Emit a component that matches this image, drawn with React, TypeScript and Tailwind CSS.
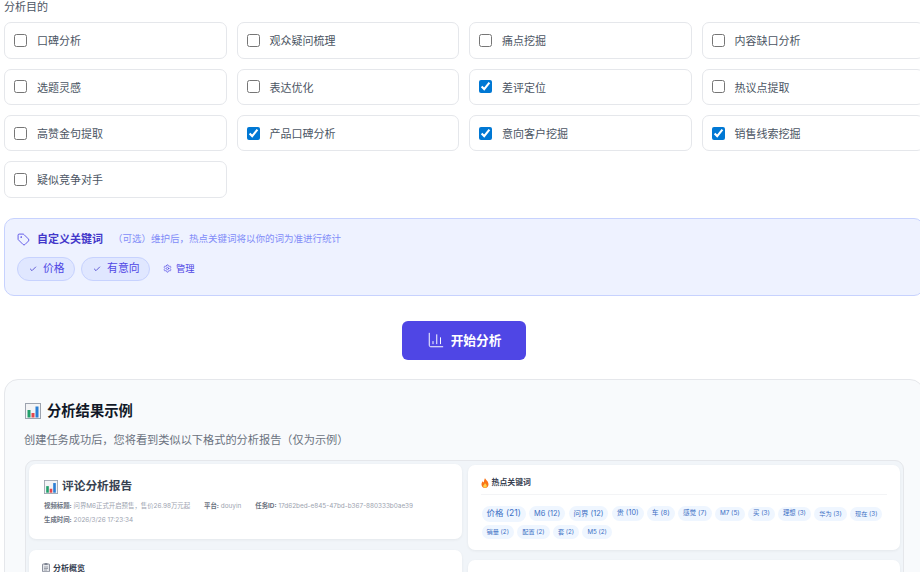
import {Check, ChartColumn, Settings, Tag} from "lucide-react";

const PURPOSES = [
  {label: "口碑分析", checked: false},
  {label: "观众疑问梳理", checked: false},
  {label: "痛点挖掘", checked: false},
  {label: "内容缺口分析", checked: false},
  {label: "选题灵感", checked: false},
  {label: "表达优化", checked: false},
  {label: "差评定位", checked: true},
  {label: "热议点提取", checked: false},
  {label: "高赞金句提取", checked: false},
  {label: "产品口碑分析", checked: true},
  {label: "意向客户挖掘", checked: true},
  {label: "销售线索挖掘", checked: true},
  {label: "疑似竞争对手", checked: false}
];

const HOT_KEYWORDS = [
  {text: "价格 (21)", size: "text-[8.5px] h-[16px]"},
  {text: "M6 (12)", size: "text-[7.4px] h-[15px]"},
  {text: "问界 (12)", size: "text-[7.4px] h-[15px]"},
  {text: "贵 (10)", size: "text-[7.2px] h-[15px]"},
  {text: "车 (8)", size: "text-[6.8px] h-[15px]"},
  {text: "感觉 (7)", size: "text-[6.6px] h-[15px]"},
  {text: "M7 (5)", size: "text-[6.4px] h-[14px]"},
  {text: "买 (3)", size: "text-[6.4px] h-[14px]"},
  {text: "理想 (3)", size: "text-[6.3px] h-[14px]"},
  {text: "华为 (3)", size: "text-[6.2px] h-[14px]"},
  {text: "现在 (3)", size: "text-[6.2px] h-[14px]"},
  {text: "销量 (2)", size: "text-[6.2px] h-[14px]"},
  {text: "配置 (2)", size: "text-[6.2px] h-[14px]"},
  {text: "套 (2)", size: "text-[6.2px] h-[14px]"},
  {text: "M5 (2)", size: "text-[6.2px] h-[14px]"}
];

function ChartEmoji({className}: {className: string}) {
  return (
    <svg viewBox="0 0 16 16" className={className}>
      <rect x="0.5" y="0.5" width="15" height="15" fill="#f3f4f6" stroke="#9ca3af" />
      <rect x="2.5" y="7" width="3" height="7.5" fill="#22a06b" />
      <rect x="6.5" y="10" width="3" height="4.5" fill="#e5484d" />
      <rect x="10.5" y="3.5" width="3" height="11" fill="#2b7fd4" />
    </svg>
  );
}

function FlameEmoji() {
  return (
    <svg viewBox="0 0 16 20" className="h-[10px] w-[8px] shrink-0">
      <path d="M8 0c1 4 7 6 7 12.5C15 17 12 20 8 20s-7-3-7-7.500c0-3 1.500-4.500 2.500-6 .5 1.500 1 2 2 2.500C6 6 6.500 3 8 0z" fill="#f97316" />
      <path d="M8 10c.5 2 3.500 3 3.500 6 0 2-1.500 3.500-3.500 3.500S4.500 18 4.500 16c0-2 3-3 3.500-6z" fill="#fcd34d" />
    </svg>
  );
}

function ClipboardEmoji() {
  return (
    <svg viewBox="0 0 16 18" className="h-[9px] w-[8px] shrink-0">
      <rect x="1" y="2" width="14" height="15.500" rx="1" fill="#e5e7eb" stroke="#6b7280" strokeWidth="1.500" />
      <rect x="5" y="0.500" width="6" height="3" fill="#6b7280" />
      <path d="M4 8h8M4 11h8M4 14h6" stroke="#6b7280" strokeWidth="1.200" />
    </svg>
  );
}

function MetaItem({label, value}: {label: string; value: string}) {
  return (
    <span>
      <span className="font-bold text-[#6b7280]">{label}</span> <span className="text-[#9ca3af]">{value}</span>
    </span>
  );
}

function KeywordChip({label}: {label: string}) {
  return (
    <span className="flex h-[24px] items-center gap-[6px] rounded-full border border-[#c7d2fe] bg-[#e0e7ff] pl-[11px] pr-[9.5px] text-[10.8px] text-[#4f46e5]">
      <Check className="size-[8px] text-[#4338ca]" strokeWidth={2.4} />
      <span className="pt-[2px]">{label}</span>
    </span>
  );
}

export default function App() {
  return (
    <div className="h-[572px] w-[920px] overflow-hidden bg-white font-['Inter','Noto_Sans_CJK_SC',sans-serif]">
      <div className="w-[924px] pl-1">
        <label className="block h-[15px] text-[11px] leading-[15px] text-[#4b5563]">分析目的</label>

        <div className="mt-[7.3px] grid grid-cols-4 gap-x-[10px] gap-y-[10px]">
          {PURPOSES.map((item) => (
            <label
              key={item.label}
              className="flex h-[36.4px] items-center gap-[10px] rounded-[7px] border border-[#e5e7eb] bg-white pl-[9px] text-[11px] leading-[18px] text-[#4b5563]"
            >
              <input
                type="checkbox"
                defaultChecked={item.checked}
                className="m-0 size-[13px] accent-[#0078d4]"
              />
              <span className="pt-[1.5px]">{item.label}</span>
            </label>
          ))}
        </div>

        <section className="mt-[19.7px] h-[78px] rounded-[10px] border border-[#c7d2fe] bg-[#eef2ff] px-[12px] pt-[13px]">
          <div className="flex h-[16px] items-center">
            <Tag className="size-[13px] text-[#4f46e5]" strokeWidth={1.6} />
            <span className="ml-[7px] text-[11px] font-bold text-[#4338ca]">自定义关键词</span>
            <span className="ml-[10px] text-[9.5px] text-[#818cf8]">（可选）维护后，热点关键词将以你的词为准进行统计</span>
          </div>
          <div className="mt-[9px] flex items-center gap-[6px]">
            <KeywordChip label="价格" />
            <KeywordChip label="有意向" />
            <button type="button" className="ml-[7px] flex items-center gap-[4px] text-[9.3px] text-[#4f46e5]">
              <Settings className="size-[9px]" strokeWidth={1.8} />
              管理
            </button>
          </div>
        </section>

        <div className="mt-[25px] flex justify-center">
          <button
            type="button"
            className="flex h-[39px] w-[124px] items-center justify-center gap-[6px] rounded-[6px] bg-[#4f46e5] text-[12.7px] font-bold text-white"
          >
            <ChartColumn className="size-[18px]" strokeWidth={1.3} />
            开始分析
          </button>
        </div>

        <section className="mt-[19px] h-[300px] rounded-t-[14px] border border-[#e5e7eb] bg-[#f8fafc] px-[19px] pt-[21px]">
          <div className="ml-px flex h-[20px] items-center gap-[6px]">
            <ChartEmoji className="size-[16px]" />
            <h3 className="text-[14.3px] font-bold text-[#111827]">分析结果示例</h3>
          </div>
          <p className="mt-[11px] text-[11.2px] leading-[16px] text-[#6b7280]">
            创建任务成功后，您将看到类似以下格式的分析报告（仅为示例）
          </p>

          <div className="ml-px mt-[12px] flex h-[200px] w-[879px] gap-[6px] rounded-[9px] border border-[#e5e7eb] bg-[#f1f5f9] p-[3px]">
            <div className="flex min-w-0 flex-1 flex-col gap-[11px]">
              <div className="h-[75px] rounded-[7px] bg-white px-[15px] pt-[16px] shadow-[0_1px_3px_rgba(0,0,0,0.06)]">
                <div className="flex h-[15px] items-center gap-[4px]">
                  <ChartEmoji className="size-[14px]" />
                  <span className="text-[11.7px] font-bold text-[#374151]">评论分析报告</span>
                </div>
                <div className="mt-[6px] flex gap-[14px] text-[6.4px] leading-[10px]">
                  <MetaItem label="视频标题:" value="问界M6正式开启预售，售价26.98万元起" />
                  <MetaItem label="平台:" value="douyin" />
                  <MetaItem label="任务ID:" value="17d62bed-e845-47bd-b367-880333b0ae39" />
                </div>
                <div className="mt-[4px] text-[6.4px] leading-[10px]">
                  <MetaItem label="生成时间:" value="2026/3/26 17:23:34" />
                </div>
              </div>
              <div className="flex-1 rounded-[7px] bg-white px-[13px] pt-[12px] shadow-[0_1px_3px_rgba(0,0,0,0.06)]">
                <div className="flex items-center gap-[3px]">
                  <ClipboardEmoji />
                  <span className="text-[8px] font-bold text-[#374151]">分析概览</span>
                </div>
              </div>
            </div>

            <div className="mt-px flex min-w-0 flex-1 flex-col gap-[10px]">
              <div className="h-[85px] rounded-[7px] bg-white px-[13px] pt-[12px] shadow-[0_1px_3px_rgba(0,0,0,0.06)]">
                <div className="flex h-[12px] items-center gap-[3px]">
                  <FlameEmoji />
                  <span className="text-[7.9px] font-bold text-[#374151]">热点关键词</span>
                </div>
                <div className="mt-[5px] h-px bg-[#f3f4f6]" />
                <div className="mt-[11px] flex flex-wrap items-center gap-x-[3.3px] gap-y-[3px] px-[1px]">
                  {HOT_KEYWORDS.map((keyword) => (
                    <span
                      key={keyword.text}
                      className={`flex items-center rounded-full bg-[#eff6ff] px-[5px] text-[#3b6fc4] ${keyword.size}`}
                    >
                      {keyword.text}
                    </span>
                  ))}
                </div>
              </div>
              <div className="flex-1 rounded-[7px] bg-white shadow-[0_1px_3px_rgba(0,0,0,0.06)]" />
            </div>
          </div>
        </section>
      </div>
    </div>
  );
}
